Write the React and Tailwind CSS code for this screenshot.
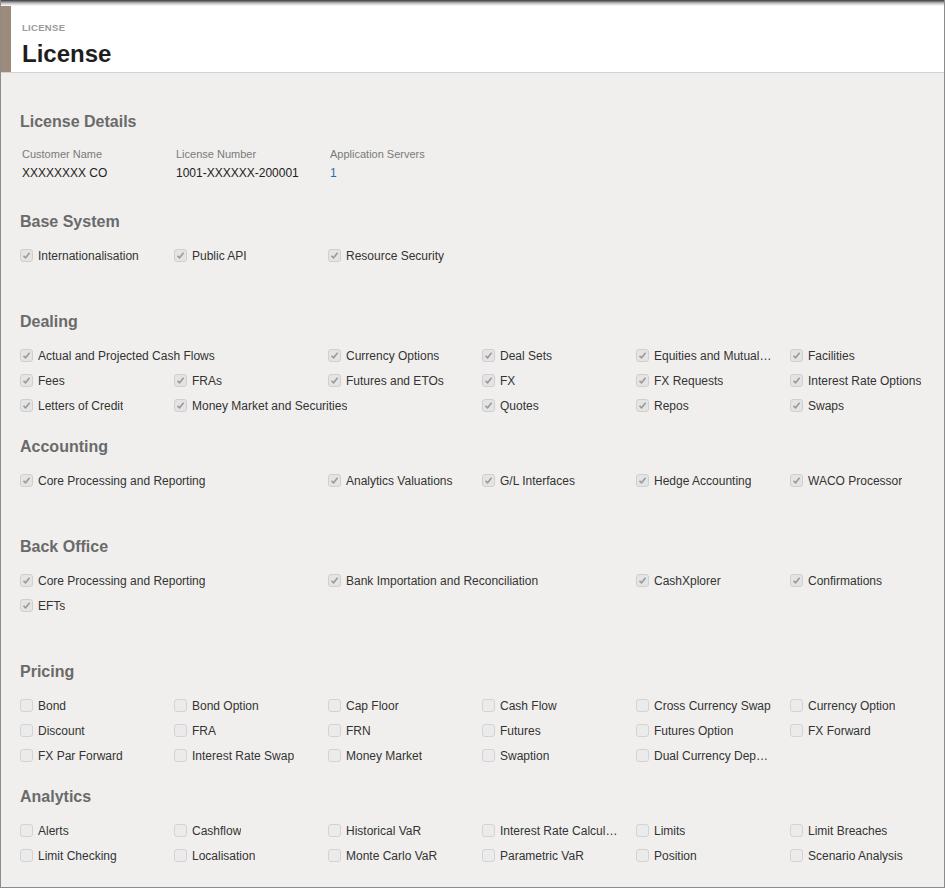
import React from 'react';

const sections = [
    {
        title: 'Base System',
        checked: true,
        minRows: 'min-h-[50px]',
        items: [['Internationalisation'], ['Public API'], ['Resource Security']],
    },
    {
        title: 'Dealing',
        checked: true,
        minRows: 'min-h-[50px]',
        items: [
            ['Actual and Projected Cash Flows', 2], ['Currency Options'], ['Deal Sets'], ['Equities and Mutual Funds'], ['Facilities'],
            ['Fees'], ['FRAs'], ['Futures and ETOs'], ['FX'], ['FX Requests'], ['Interest Rate Options'],
            ['Letters of Credit'], ['Money Market and Securities', 2], ['Quotes'], ['Repos'], ['Swaps'],
        ],
    },
    {
        title: 'Accounting',
        checked: true,
        minRows: 'min-h-[50px]',
        items: [['Core Processing and Reporting', 2], ['Analytics Valuations'], ['G/L Interfaces'], ['Hedge Accounting'], ['WACO Processor']],
    },
    {
        title: 'Back Office',
        checked: true,
        minRows: 'min-h-[75px]',
        items: [['Core Processing and Reporting', 2], ['Bank Importation and Reconciliation', 2], ['CashXplorer'], ['Confirmations'], ['EFTs']],
    },
    {
        title: 'Pricing',
        checked: false,
        minRows: 'min-h-[50px]',
        items: [
            ['Bond'], ['Bond Option'], ['Cap Floor'], ['Cash Flow'], ['Cross Currency Swap'], ['Currency Option'],
            ['Discount'], ['FRA'], ['FRN'], ['Futures'], ['Futures Option'], ['FX Forward'],
            ['FX Par Forward'], ['Interest Rate Swap'], ['Money Market'], ['Swaption'], ['Dual Currency Deposit'],
        ],
    },
    {
        title: 'Analytics',
        checked: false,
        minRows: 'min-h-[50px]',
        items: [
            ['Alerts'], ['Cashflow'], ['Historical VaR'], ['Interest Rate Calculator'], ['Limits'], ['Limit Breaches'],
            ['Limit Checking'], ['Localisation'], ['Monte Carlo VaR'], ['Parametric VaR'], ['Position'], ['Scenario Analysis'],
        ],
    },
];

const Checkbox = ({ checked }) => (
    <span className={`flex h-[13px] w-[13px] shrink-0 items-center justify-center rounded-[3px] border ${checked ? 'border-[#cfcfcf] bg-[#e4e4e4]' : 'border-[#d3d3d3] bg-[#ebebeb]'}`}>
        {checked && (
            <svg width="9" height="9" viewBox="0 0 9 9">
                <path d="M1.5 4.8 L3.6 6.8 L7.6 1.8" fill="none" stroke="#9a9a9a" strokeWidth="1.6" />
            </svg>
        )}
    </span>
);

const Heading = ({ children }) => (
    <h2 className="h-[20px] text-[16px] font-bold leading-[22px] text-[#6a6a6a]">{children}</h2>
);

const App = () => {
    return (
        <div className="h-[888px] w-[945px] overflow-hidden border-x border-b border-[#8c8c8c] bg-[#f0efed] font-['Liberation_Sans',Arial,sans-serif] text-[#333]">
            {/* Header */}
            <div className="relative flex h-[73px] border-b border-[#d2d2d2] bg-white">
                <div className="absolute inset-x-0 top-0 h-[6px] bg-gradient-to-b from-[#3a3a3a] via-[#bdbdbd] to-white" />
                <div className="w-[10px] shrink-0 bg-[#9c8a7b]" />
                <div className="pl-[11px] pt-[22px]">
                    <p className="text-[9.5px] font-bold leading-[12px] tracking-[0.3px] text-[#9a9a9a]">LICENSE</p>
                    <h1 className="mt-[6px] text-[24px] font-bold leading-[28px] text-[#1e1e1e]">License</h1>
                </div>
            </div>

            <div className="pl-[19px] pt-[38px]">
                {/* License details */}
                <Heading>License Details</Heading>
                <div className="mt-[16px] grid grid-cols-[154px_154px_154px] pl-[2px]">
                    <div>
                        <p className="text-[11px] leading-[14px] text-[#7a7a7a]">Customer Name</p>
                        <p className="mt-[4px] text-[12px] leading-[16px] text-[#222]">XXXXXXXX CO</p>
                    </div>
                    <div>
                        <p className="text-[11px] leading-[14px] text-[#7a7a7a]">License Number</p>
                        <p className="mt-[4px] text-[12px] leading-[16px] text-[#222]">1001-XXXXXX-200001</p>
                    </div>
                    <div>
                        <p className="text-[11px] leading-[14px] text-[#7a7a7a]">Application Servers</p>
                        <p className="mt-[4px] text-[12px] leading-[16px] text-[#2a6db5]">1</p>
                    </div>
                </div>

                <div className="mt-[30px]">
                    {sections.map((section) => (
                        <div key={section.title} className="mb-[18px]">
                            <Heading>{section.title}</Heading>
                            <div className={`mt-[12px] grid auto-rows-[25px] grid-cols-[repeat(6,154px)] content-start ${section.minRows}`}>
                                {section.items.map(([label, span], i) => (
                                    <div key={i} className={`flex min-w-0 items-center gap-[5px] pr-[18px] ${span === 2 ? 'col-span-2' : ''}`}>
                                        <Checkbox checked={section.checked} />
                                        <span className="truncate text-[12px] leading-[16px] text-[#333]">{label}</span>
                                    </div>
                                ))}
                            </div>
                        </div>
                    ))}
                </div>
            </div>
        </div>
    );
};

export default App;
